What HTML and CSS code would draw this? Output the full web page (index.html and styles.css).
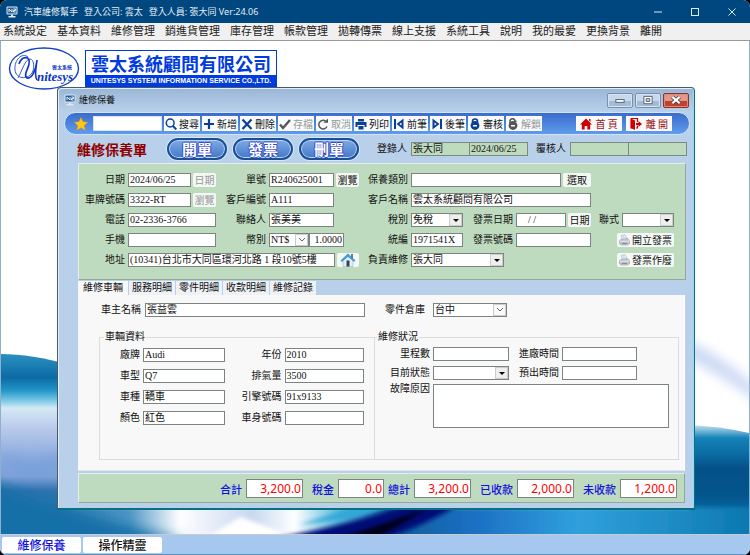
FILE: index.html
```html
<!DOCTYPE html>
<html lang="zh-Hant">
  <head>
    <meta charset="UTF-8" />
    <meta name="viewport" content="width=device-width, initial-scale=1.0" />
    <title>汽車維修幫手</title>
    <link rel="stylesheet" href="styles.css">
  </head>
  <body>
    <!-- shared icons -->
    <svg class="defs" width="0" height="0">
      <symbol id="app" viewBox="0 0 12 12">
        <rect x="0.5" y="0.5" width="11" height="8" rx="1" fill="#dce9f5" />
        <rect x="1.5" y="1.5" width="9" height="6" fill="#245f9d" />
        <path d="M3 6V3l3 3V3m1.500 0h2v1.500h-2V6h2" fill="none" stroke="#fff" stroke-width="0.9" />
        <path d="M5 8.500h2v1.500h2.500V11.500h-7V10H5z" fill="#e8e8e8" />
      </symbol>
      <symbol id="lock" viewBox="0 0 12 12">
        <path d="M3.500 5.500V3.500a2.500 2.500 0 0 1 5 0v2" fill="none" stroke="currentColor" stroke-width="1.600" />
        <circle cx="6" cy="7.500" r="4.400" fill="currentColor" />
        <path d="M4 7h4v1.500H4z" fill="#fff" />
      </symbol>
      <symbol id="unlock" viewBox="0 0 12 12">
        <path d="M3 5.500V3.500a2.500 2.500 0 0 1 5-0.500l1.500 0.500" fill="none" stroke="currentColor" stroke-width="1.600" />
        <circle cx="6" cy="7.500" r="4.400" fill="currentColor" />
        <path d="M4 7h4v1.500H4z" fill="#fff" />
      </symbol>
      <symbol id="printer" viewBox="0 0 12 12">
        <path d="M3.500 5.500L2.500 1l4-0.800 2.500 5z" fill="#fff" stroke="#8fa6c0" stroke-width="0.600" />
        <path d="M3.500 2l2.500-0.500M4 3.500l3-0.500" stroke="#6f9fd0" stroke-width="0.500" />
        <path d="M0.500 6.500L3 5l6.500-0.500 2 2V10L9 11.500H2.500L0.500 10z" fill="#c3cad2" stroke="#8a939c" stroke-width="0.600" />
        <path d="M0.500 6.500l2 1.500h6.500l2.500-1.500" fill="none" stroke="#fff" stroke-width="0.700" />
        <path d="M3 9.500h6" stroke="#5e6a76" stroke-width="0.900" />
      </symbol>
    </svg>

    <div class="app">
      <header class="titlebar">
        <svg class="icon"><use href="#app" /></svg>
        <h1>汽車維修幫手</h1>
        <span>登入公司: 雲太</span>
        <span>登入人員: 張大同 Ver:24.06</span>
        <div class="sysbtns">
          <button aria-label="最小化"><svg viewBox="0 0 10 10"><path d="M1 5h8" /></svg></button>
          <button aria-label="最大化"><svg viewBox="0 0 10 10"><rect x="1.500" y="1.500" width="7" height="7" /></svg></button>
          <button aria-label="關閉"><svg viewBox="0 0 10 10"><path d="M1.500 1.500l7 7M8.500 1.500l-7 7" /></svg></button>
        </div>
      </header>

      <nav class="menu">
        <a href="#">系統設定</a>
        <a href="#">基本資料</a>
        <a href="#">維修管理</a>
        <a href="#">銷進貨管理</a>
        <a href="#">庫存管理</a>
        <a href="#">帳款管理</a>
        <a href="#">拋轉傳票</a>
        <a href="#">線上支援</a>
        <a href="#">系統工具</a>
        <a href="#">說明</a>
        <a href="#">我的最愛</a>
        <a href="#">更換背景</a>
        <a href="#">離開</a>
      </nav>

      <main class="desktop">
        <svg class="wallpaper" viewBox="0 0 750 493" preserveAspectRatio="none" aria-hidden="true">
          <defs>
            <linearGradient id="left" x1="0" y1="0" x2="0" y2="1">
              <stop offset="0" stop-color="#2b8fc0" />
              <stop offset="0.060" stop-color="#1c80b4" />
              <stop offset="0.130" stop-color="#0c6ba4" />
              <stop offset="0.200" stop-color="#1f93c6" />
              <stop offset="0.260" stop-color="#7cc9e6" />
              <stop offset="0.300" stop-color="#d5e8f4" />
              <stop offset="0.420" stop-color="#b7c8ea" />
              <stop offset="0.560" stop-color="#90aee0" />
              <stop offset="0.680" stop-color="#7fa2d8" />
              <stop offset="0.760" stop-color="#2c72ae" />
              <stop offset="1" stop-color="#1878ae" />
            </linearGradient>
            <linearGradient id="right" x1="0" y1="0" x2="0" y2="1">
              <stop offset="0" stop-color="#c4e2f0" />
              <stop offset="0.120" stop-color="#1482b8" />
              <stop offset="0.280" stop-color="#0a6aa0" />
              <stop offset="0.400" stop-color="#045088" />
              <stop offset="0.650" stop-color="#04568e" />
              <stop offset="1" stop-color="#0878b0" />
            </linearGradient>
            <linearGradient id="floor" x1="0" y1="0" x2="1" y2="0">
              <stop offset="0" stop-color="#2476ac" />
              <stop offset="0.100" stop-color="#4c94c4" />
              <stop offset="0.170" stop-color="#fff" />
              <stop offset="0.270" stop-color="#c8d8f0" />
              <stop offset="0.330" stop-color="#fff" />
              <stop offset="0.390" stop-color="#58b8dc" />
              <stop offset="0.460" stop-color="#0c5c98" />
              <stop offset="0.580" stop-color="#1c70c4" />
              <stop offset="0.720" stop-color="#30a0dc" />
              <stop offset="0.850" stop-color="#1f8cc6" />
              <stop offset="1" stop-color="#0470a8" />
            </linearGradient>
            <filter id="soft2" x="-20%" y="-50%" width="140%" height="200%"><feGaussianBlur stdDeviation="2" /></filter>
            <filter id="soft6" x="-20%" y="-50%" width="140%" height="200%"><feGaussianBlur stdDeviation="6" /></filter>
          </defs>
          <rect width="750" height="493" fill="#fff" />
          <path d="M0 313Q30 313 70 324V493H0z" fill="url(#left)" />
          <path d="M0 412Q30 428 70 408V424Q30 448 0 424z" fill="#6f98d8" opacity="0.5" filter="url(#soft6)" />
          <path d="M680 298Q710 304 760 348V362Q720 332 680 314z" fill="#ccd8f4" filter="url(#soft6)" />
          <path d="M690 384Q720 385 750 392V493H690z" fill="url(#right)" />
          <path d="M56 466H780V510H56z" fill="url(#floor)" filter="url(#soft2)" />
          <path d="M-10 440Q50 470 190 500H-10z" fill="#1470a8" filter="url(#soft6)" />
          <path d="M200 500l40-24q30 10 60 24z" fill="#fff" filter="url(#soft2)" />
          <path d="M368 462h34l-44 14-60 8z" fill="#30a8d8" filter="url(#soft2)" />
          <path d="M260 500Q350 484 412 462H462Q430 482 380 500z" fill="#001078" filter="url(#soft2)" />
          <path d="M330 500Q400 478 430 466L400 484 370 500z" fill="#000418" filter="url(#soft2)" />
        </svg>

        <div class="logo">
          <svg class="oval" viewBox="0 0 72 43" role="img" aria-label="Unitesys">
            <ellipse cx="36" cy="21.500" rx="34.500" ry="20.500" fill="#fff" stroke="#1040c8" stroke-width="1.400" />
            <path d="M20 10C14 5 6 13 7 23c1 9 12 10 17 3 3-5 2-14-2-14-5 0-8 12-12 19" fill="none" stroke="#3558c8" stroke-width="1" />
            <path d="M11 17c3-9 12-8 10 0-1 6-6 11-2 14 5 1 9-8 10-18-1 9-3 16 0 20" fill="none" stroke="#0b36c4" stroke-width="1.600" />
            <text x="29" y="34" class="script">nitesys</text>
            <text x="44" y="22" class="tiny">雲太系統</text>
          </svg>
          <div class="company">
            <strong>雲太系統顧問有限公司</strong>
            <small>UNITESYS SYSTEM INFORMATION SERVICE CO.,LTD.</small>
          </div>
        </div>

        <section class="window">
          <header class="wintitle">
            <svg class="icon"><use href="#app" /></svg>
            <h2>維修保養</h2>
            <div class="winbtns">
              <button aria-label="最小化視窗"><svg viewBox="0 0 12 12"><rect x="1.500" y="5" width="9" height="3" fill="#fff" stroke="#4d5b6b" /></svg></button>
              <button aria-label="最大化視窗"><svg viewBox="0 0 12 12"><path d="M1.500 1.500h9v8h-9zM4 4h4v3H4z" fill="#fff" fill-rule="evenodd" stroke="#4d5b6b" /></svg></button>
              <button class="close" aria-label="關閉視窗"><svg viewBox="0 0 12 12"><path d="M2 2l8 7M10 2L2 9" stroke="#5a3a3a" stroke-width="4" /><path d="M2 2l8 7M10 2L2 9" stroke="#fff" stroke-width="2.400" /></svg></button>
            </div>
          </header>

          <div class="toolbar">
            <svg class="star" viewBox="0 0 14 14"><path d="M7 0.500l2 4.300 4.700 0.500-3.500 3.200 1 4.700L7 10.800l-4.200 2.400 1-4.700L0.300 5.300 5 4.800z" fill="#ffc814" stroke="#e09a10" stroke-width="0.500" /></svg>
            <input class="keyword" type="text" aria-label="搜尋">
            <button><svg viewBox="0 0 12 12"><circle cx="5.200" cy="5" r="3.900" fill="none" stroke="currentColor" stroke-width="1.500" /><path d="M8 8l3.300 3.500" stroke="currentColor" stroke-width="1.900" /></svg>搜尋</button>
            <button><svg viewBox="0 0 12 12"><path d="M6 1v10M1 6h10" stroke="currentColor" stroke-width="2.200" /></svg>新增</button>
            <button><svg viewBox="0 0 12 12"><path d="M1.500 1.500l9 9.500M10.500 1.500l-9 9.500" stroke="currentColor" stroke-width="2.200" /></svg>刪除</button>
            <button disabled><svg viewBox="0 0 12 12"><path d="M1 6.500l3 3.500 7-8" fill="none" stroke="currentColor" stroke-width="2.400" /></svg>存檔</button>
            <button disabled><svg viewBox="0 0 12 12"><path d="M10 8.500A4.300 4.300 0 1 1 8.500 3" fill="none" stroke="currentColor" stroke-width="1.500" /><path d="M6.500 4.800h4.500V0.500z" fill="currentColor" /></svg>取消</button>
            <button><svg viewBox="0 0 12 12"><path d="M3 1h6v2.500H3zM0.500 4h11v5H9.500V7h-7v2h-2zM3.500 8h5v3.500h-5z" fill="currentColor" /></svg>列印</button>
            <button><svg viewBox="0 0 12 12"><path d="M1 1h2v10H1zM10.500 0.500v11L3.500 6z" fill="currentColor" /><path d="M8.500 4.500v3L6.500 6z" fill="#fff" /></svg>前筆</button>
            <button><svg viewBox="0 0 12 12"><path d="M9 1h2v10H9zM1.500 0.500v11L8.500 6z" fill="currentColor" /><path d="M3.500 4.500v3L5.500 6z" fill="#fff" /></svg>後筆</button>
            <button><svg><use href="#lock" /></svg>審核</button>
            <button disabled><svg><use href="#unlock" /></svg>解鎖</button>
            <div class="exits">
              <button><svg viewBox="0 0 12 12"><path d="M6 0.500L12 6.500h-1.800V11.500H7.300V8H4.700v3.500H1.800V6.500H0L6 0.500zM9 1h1.500v3L9 2.500z" fill="currentColor" /></svg>首 頁</button>
              <button><svg viewBox="0 0 12 12"><path d="M1 0.500h6.500V4M1 0.500v9.500h2M7.500 7.500V10H6" fill="none" stroke="currentColor" stroke-width="1.200" /><path d="M1 0.500l4 2V12L1 10zM6 5h2.500V3L12 6 8.500 9V7H6z" fill="currentColor" /></svg>離 開</button>
            </div>
          </div>

          <div class="heading">
            <h3>維修保養單</h3>
            <div class="pills">
              <button>開單</button>
              <button>發票</button>
              <button>刪單</button>
            </div>
            <label for="creator">登錄人</label>
            <div class="pair">
              <input id="creator" type="text" value="張大同">
              <input type="text" value="2024/06/25" aria-label="登錄日期">
            </div>
            <label for="checker">覆核人</label>
            <div class="pair">
              <input id="checker" type="text">
              <input type="text" aria-label="覆核日期">
            </div>
          </div>

          <div class="panel form">
            <label for="date">日期</label>
            <div class="field"><input id="date" type="text" value="2024/06/25"><button disabled>日期</button></div>
            <label for="no">單號</label>
            <div class="field"><input id="no" type="text" value="R240625001"><button>瀏覽</button></div>
            <label for="kind">保養類別</label>
            <div class="field three"><input id="kind" type="text"><button class="pick">選取</button></div>

            <label for="plate" class="first">車牌號碼</label>
            <div class="field"><input id="plate" type="text" value="3322-RT"><button disabled>瀏覽</button></div>
            <label for="cust">客戶編號</label>
            <div class="field short"><input id="cust" type="text" value="A111"></div>
            <label for="custname">客戶名稱</label>
            <div class="field three"><input id="custname" type="text" value="雲太系統顧問有限公司"></div>

            <label for="tel" class="first">電話</label>
            <div class="field"><input id="tel" type="text" value="02-2336-3766"></div>
            <label for="contact">聯絡人</label>
            <div class="field short"><input id="contact" type="text" value="張美美"></div>
            <label for="tax">稅別</label>
            <div class="field"><select id="tax"><option>免稅</option></select></div>
            <label for="invdate">發票日期</label>
            <div class="field"><input id="invdate" type="text" value="    / /"><button>日期</button></div>
            <label for="copies">聯式</label>
            <div class="field"><select id="copies"><option></option></select></div>

            <label for="mobile" class="first">手機</label>
            <div class="field"><input id="mobile" type="text"></div>
            <label for="currency">幣別</label>
            <div class="field rate">
              <select id="currency" class="thin"><option>NT$</option></select>
              <input type="text" value="1.0000" aria-label="匯率">
            </div>
            <label for="taxid">統編</label>
            <div class="field"><input id="taxid" type="text" value="1971541X"></div>
            <label for="invno">發票號碼</label>
            <div class="field"><input id="invno" type="text"></div>
            <button class="invoice"><svg><use href="#printer" /></svg>開立發票</button>

            <label for="addr" class="first">地址</label>
            <div class="field addr">
              <input id="addr" type="text" value="(10341)台北市大同區環河北路 1 段10號5樓">
              <button class="home" aria-label="地圖"><svg viewBox="0 0 16 14"><path d="M3 7v6.500h10V7L8 2z" fill="#e6eef5" stroke="#8ba0b4" stroke-width="0.500" /><path d="M11 1h2v4h-2z" fill="#8c6d62" /><path d="M0.800 7.500L8 0.800l7.200 6.700-1.300 1L8 3.500 2.100 8.500z" fill="#37a1e4" stroke="#1873b8" stroke-width="0.400" /><path d="M6.500 7.500h3v6h-3z" fill="#28465f" /></svg></button>
            </div>
            <label for="staff">負責維修</label>
            <div class="field staff"><select id="staff"><option>張大同</option></select></div>
            <button class="invoice"><svg><use href="#printer" /></svg>發票作廢</button>
          </div>

          <div class="tabs" role="tablist">
            <button role="tab" aria-selected="true">維修車輛</button>
            <button role="tab">服務明細</button>
            <button role="tab">零件明細</button>
            <button role="tab">收款明細</button>
            <button role="tab">維修記錄</button>
          </div>

          <div class="pane">
            <div class="owner">
              <label for="owner">車主名稱</label>
              <input id="owner" type="text" value="張益雲">
              <label for="depot" class="depot">零件倉庫</label>
              <select id="depot" class="thin"><option>台中</option></select>
            </div>
            <div class="groups">
              <fieldset class="car">
                <legend>車輛資料</legend>
                <div class="cells">
                  <label for="brand">廠牌</label><input id="brand" type="text" value="Audi">
                  <label for="year">年份</label><input id="year" type="text" value="2010">
                  <label for="model">車型</label><input id="model" type="text" value="Q7">
                  <label for="cc">排氣量</label><input id="cc" type="text" value="3500">
                  <label for="type">車種</label><input id="type" type="text" value="轎車">
                  <label for="engine">引擎號碼</label><input id="engine" type="text" value="91x9133">
                  <label for="color">顏色</label><input id="color" type="text" value="紅色">
                  <label for="body">車身號碼</label><input id="body" type="text">
                </div>
              </fieldset>
              <fieldset class="status">
                <legend>維修狀況</legend>
                <div class="cells">
                  <label for="km">里程數</label><input id="km" type="text">
                  <label for="in">進廠時間</label><input id="in" type="text">
                  <label for="state" class="first">目前狀態</label><select id="state"><option></option></select>
                  <label for="out">預出時間</label><input id="out" type="text">
                  <label for="reason" class="first">故障原因</label><textarea id="reason"></textarea>
                </div>
              </fieldset>
            </div>
          </div>

          <div class="panel totals">
            <label for="sum">合計</label><input id="sum" type="text" value="3,200.0">
            <label for="vat">稅金</label><input id="vat" class="small" type="text" value="0.0">
            <label for="total" class="near">總計</label><input id="total" type="text" value="3,200.0">
            <label for="paid">已收款</label><input id="paid" type="text" value="2,000.0">
            <label for="unpaid">未收款</label><input id="unpaid" type="text" value="1,200.0">
          </div>
        </section>
      </main>

      <footer class="taskbar">
        <button class="active">維修保養</button>
        <button>操作精靈</button>
      </footer>
    </div>
  </body>
</html>
```
FILE: styles.css
```css
* {
  box-sizing: border-box;
}
body {
  margin: 0;
  background-color: #000;
  color: #111;
  font: 10px/14px "Liberation Serif", "Noto Sans CJK TC", serif;
}
h1,
h2,
h3 {
  margin: 0;
  font: inherit;
}
button,
input,
select,
textarea {
  font: inherit;
  color: inherit;
  margin: 0;
  min-width: 0;
  border-radius: 0;
}
button {
  padding: 0;
  border: 0;
  background: none;
  white-space: nowrap;
}
label {
  white-space: nowrap;
}
.defs {
  position: absolute;
}
.icon {
  width: 12px;
  height: 12px;
}

.app {
  display: flex;
  flex-direction: column;
  min-height: 100vh;
  border-radius: 7px;
  overflow: hidden;
  background-color: #fff;
}

/* main title and menu */
.titlebar {
  display: flex;
  align-items: center;
  gap: 6px;
  height: 23px;
  padding: 0 13px 0 6px;
  background-color: #00467f;
  color: #e4edf5;
  font: 9px/14px "Noto Sans", "Noto Sans CJK TC", sans-serif;
}
.sysbtns {
  display: flex;
  gap: 27px;
  margin-left: auto;
}
.sysbtns svg {
  display: block;
  width: 10px;
  height: 10px;
  fill: none;
  stroke: #dfe8f0;
}
.menu {
  display: flex;
  gap: 10px;
  height: 18px;
  padding: 0 3px;
  border-bottom: 1px solid #999;
  background-color: #f0f0f0;
  font: 11px/15px "Noto Sans CJK TC", sans-serif;
}
.menu a {
  color: #222;
  text-decoration: none;
  white-space: nowrap;
}

/* desktop */
.desktop {
  position: relative;
  flex: 1;
  padding: 6px 54px 24px 56px;
  border: solid #8fb0cc;
  border-width: 0 1px;
}
.wallpaper {
  position: absolute;
  inset: 0;
  width: 100%;
  height: 100%;
}
.logo {
  position: relative;
  display: flex;
  gap: 5px;
  margin: 0 0 -3px -49px;
}
.oval {
  width: 72px;
  height: 43px;
}
.oval text {
  fill: #0b36c4;
}
.script {
  font: italic bold 13px "Liberation Serif", serif;
}
.tiny {
  font: bold 5px "Noto Sans CJK TC", sans-serif;
}
.company {
  display: flex;
  flex-direction: column;
  align-self: flex-start;
  margin-top: 3px;
  border: 1px solid #003be0;
  background-color: #fff;
  text-align: center;
}
.company strong {
  padding: 0 5px;
  color: #003be0;
  font: bold 18px/24px "Noto Sans CJK TC", sans-serif;
}
.company small {
  background-color: #003be0;
  color: #fff;
  font: bold 7px/12px "Liberation Sans", sans-serif;
}

/* inner window */
.window {
  position: relative;
  padding: 0 4px 5px 6px;
  border: 1px solid #4b5a68;
  border-right-color: #0c7088;
  border-bottom: 2px solid #087080;
  border-radius: 4px 4px 0 0;
  background: linear-gradient(#9ab6d5, #b9d0ea 24px, #b9d0ea);
  box-shadow: inset 1px 1px #e2eefa, inset -1px 0 #8fdcf0;
}
.wintitle {
  display: flex;
  align-items: center;
  gap: 3px;
  height: 24px;
  padding: 0 1px 0 0;
  font: 9px/14px "Noto Sans CJK TC", sans-serif;
}
.winbtns {
  display: flex;
  gap: 2px;
  margin-left: auto;
}
.winbtns button {
  display: flex;
  justify-content: center;
  align-items: center;
  width: 26px;
  height: 15px;
  border: 1px solid #7890ac;
  border-radius: 2px;
  background: linear-gradient(#c6d8ec 50%, #a3bbd6 50%);
  box-shadow: inset 0 0 0 1px #d5e3f2;
}
.winbtns .close {
  border-color: #8a3430;
  background: linear-gradient(#e09a8c 50%, #c4402c 50%);
  box-shadow: inset 0 0 0 1px #dd8a7c;
}
.winbtns svg {
  width: 12px;
  height: 11px;
}
.toolbar {
  display: flex;
  align-items: center;
  gap: 2px;
  height: 23px;
  padding: 0 17px 0 9px;
  border: 1px solid #d3e4f6;
  border-radius: 12px;
  background: linear-gradient(#3b6ccc, #5f9cec);
  font: 10px/14px "Noto Sans CJK TC", sans-serif;
}
.star {
  flex: none;
  width: 14px;
  height: 14px;
}
.keyword {
  width: 69px;
  height: 15px;
  margin-left: 3px;
  border: 1px solid #d8e4f0;
  background-color: #fff;
}
.toolbar button {
  display: flex;
  align-items: center;
  gap: 2px;
  height: 15px;
  padding: 0 1px;
  background-color: #f8fafd;
}
.toolbar button:disabled {
  color: #999;
}
.toolbar button svg {
  width: 12px;
  height: 12px;
  color: #0a3f96;
}
.toolbar button:disabled svg {
  color: #555;
}
.exits {
  display: flex;
  gap: 4px;
  margin-left: auto;
}
.toolbar .exits button {
  gap: 4px;
  padding: 0 4px;
  color: #a01010;
}
.toolbar .exits svg {
  color: #d00000;
}
.heading {
  display: flex;
  align-items: center;
  height: 28px;
  padding: 0 3px 0 13px;
}
.heading h3 {
  flex: none;
  color: #900000;
  font: bold 14px/20px "Noto Sans CJK TC", sans-serif;
}
.pills {
  display: flex;
  gap: 6px;
  margin: 0 18px 0 20px;
}
.pills button {
  width: 60px;
  height: 22px;
  border: 2px solid #1c4f96;
  border-radius: 11px;
  background: linear-gradient(#7ea9e4, #4478c8);
  box-shadow: inset 0 0 0 1px #b8d8f8, 0 0 0 1px #d5e8fa;
  color: #fff;
  font: bold 15px/16px "Noto Sans CJK TC", sans-serif;
  text-shadow: 1px 0 #3648c8, -1px 0 #3648c8, 0 1px #3648c8, 0 -1px #3648c8;
}
.pair {
  display: flex;
  flex: 1;
  min-width: 0;
  margin: 0 8px 0 4px;
}
.pair:last-child {
  margin-right: 0;
}
.pair input {
  flex: 1;
  width: 0;
  height: 14px;
  padding: 0 1px;
  border: 1px solid #7a8a7c;
  background-color: #bfdbbf;
}
.pair input + input {
  border-left: 0;
}

/* form */
.panel {
  border: 1px solid #e4f0e8;
  border-right-color: #94a898;
  border-bottom-color: #94a898;
  background-color: #bfdbbf;
}
.form {
  display: grid;
  grid-template-columns: 46px 88fr 47px 90fr 46px 52fr 47px 75fr 25px 52fr;
  grid-auto-rows: 20px;
  gap: 0 3px;
  align-items: center;
  margin: 0 4px 0 14px;
  padding: 6px 11px 9px 0;
}
.form > label,
.cells > label {
  text-align: right;
}
.form > .first,
.cells > .first {
  grid-column: 1;
}
.field {
  display: flex;
  gap: 2px;
}
.field input,
.field select {
  flex: 1;
  width: 100%;
}
.short {
  padding-right: 25px;
}
.three {
  grid-column: span 3;
}
.field.rate {
  gap: 0;
  padding-right: 15px;
}
.rate input {
  flex: none;
  width: 35px;
  text-align: right;
}
.addr {
  grid-column: 2 / 5;
}
.staff {
  grid-column: span 2;
  padding-right: 9px;
}
.form button {
  flex: none;
  width: 23px;
  height: 14px;
  border-radius: 2px;
  background-color: #f4f8f4;
  font: 10px/14px "Noto Sans CJK TC", sans-serif;
}
.form button:disabled {
  color: #999;
}
.form .pick {
  width: 28px;
}
.form .home {
  width: 22px;
}
.home svg {
  display: block;
  width: 16px;
  height: 14px;
  margin: auto;
}
.form .invoice {
  display: flex;
  align-items: center;
  gap: 2px;
  grid-column: 9 / 11;
  justify-self: end;
  width: 57px;
  padding: 0 2px;
}
.invoice svg {
  width: 12px;
  height: 12px;
}
.field input,
.owner input,
.cells input,
.cells textarea,
select {
  height: 14px;
  padding: 0 1px;
  border: 1px solid #7c8480;
  background-color: #fff;
}
select {
  appearance: none;
  padding: 0 14px 0 1px;
  background: url("data:image/svg+xml,%3Csvg xmlns='http://www.w3.org/2000/svg' width='13' height='12'%3E%3Crect x='.5' y='.5' width='12' height='11' fill='%23eee' stroke='%23ccc'/%3E%3Cpath d='M4 5h6L7 8z'/%3E%3C/svg%3E") right center no-repeat #fff;
  line-height: 12px;
}
select.thin {
  background-image: url("data:image/svg+xml,%3Csvg xmlns='http://www.w3.org/2000/svg' width='13' height='12'%3E%3Crect x='.5' y='.5' width='12' height='11' fill='%23fafafa' stroke='%23ccc'/%3E%3Cpath d='M4 4l3 3 3-3' fill='none' stroke='%23666'/%3E%3C/svg%3E");
}

/* tabs */
.tabs {
  display: flex;
  gap: 1px;
  margin: 1px 0 0 14px;
}
.tabs button {
  height: 14px;
  padding: 0 3px;
  background-color: #eef2f6;
}
.tabs [aria-selected="true"] {
  padding: 0 5px;
  background-color: #f8f8f8;
}
.pane {
  margin: 0 5px 2px 14px;
  padding: 8px 5px 10px 21px;
  border-right: 1px solid #fff;
  border-bottom: 1px solid #dfe6ee;
  background-color: #f8f8f8;
}
.owner {
  display: grid;
  grid-template-columns: 42px 219fr 60px 74fr 167fr;
  gap: 4px;
  align-items: center;
  margin-bottom: 13px;
}
.owner label {
  text-align: right;
}
.owner .depot {
  padding-right: 4px;
}
.groups {
  display: flex;
}
fieldset {
  min-width: 0;
  margin: 0;
  padding: 0;
  border: 1px solid #dcdcdc;
}
legend {
  margin-left: 4px;
  padding: 0 1px;
}
.car {
  flex: 275;
}
.status {
  flex: 304;
  border-left: 0;
}
.status legend {
  margin-left: 2px;
}
.cells {
  display: grid;
  gap: 0 3px;
  align-items: center;
}
.car .cells {
  grid-template-columns: 40px 81fr 54px 79fr;
  grid-auto-rows: 21px;
  padding: 0 10px 31px 0;
}
.status .cells {
  grid-template-columns: 55px 76fr 47px 75fr 29fr;
  grid-template-rows: 19px 19px auto;
  padding: 0 9px 0 0;
}
.cells textarea {
  grid-column: 2 / 6;
  height: 44px;
  margin-top: 2px;
  resize: none;
}
.cells label[for="reason"] {
  align-self: start;
}

/* totals */
.totals {
  display: flex;
  justify-content: flex-end;
  align-items: center;
  margin: 0 5px 0 14px;
  padding: 5px 7px 4px;
  color: #1010e0;
  font: 500 11px/18px "Noto Sans CJK TC", sans-serif;
}
.totals label {
  margin: 0 4px 0 9px;
}
.totals .near {
  margin-left: 4px;
}
.totals input {
  width: 57px;
  height: 19px;
  padding: 0 1px;
  border: 1px solid #7c8480;
  background-color: #fff;
  color: #f00;
  font: 12px/16px "Noto Sans", sans-serif;
  text-align: right;
}
.totals .small {
  width: 46px;
}

/* task bar */
.taskbar {
  display: flex;
  gap: 2px;
  height: 21px;
  padding: 2px;
  border-top: 1px solid #c8ccd0;
  border-bottom: 1px solid #5a90c0;
  background-color: #a6c8ee;
}
.taskbar button {
  width: 79px;
  height: 16px;
  border-radius: 2px;
  background-color: #fff;
  font: 500 12px/16px "Noto Sans CJK TC", sans-serif;
}
.taskbar .active {
  color: #1010e0;
}
```
